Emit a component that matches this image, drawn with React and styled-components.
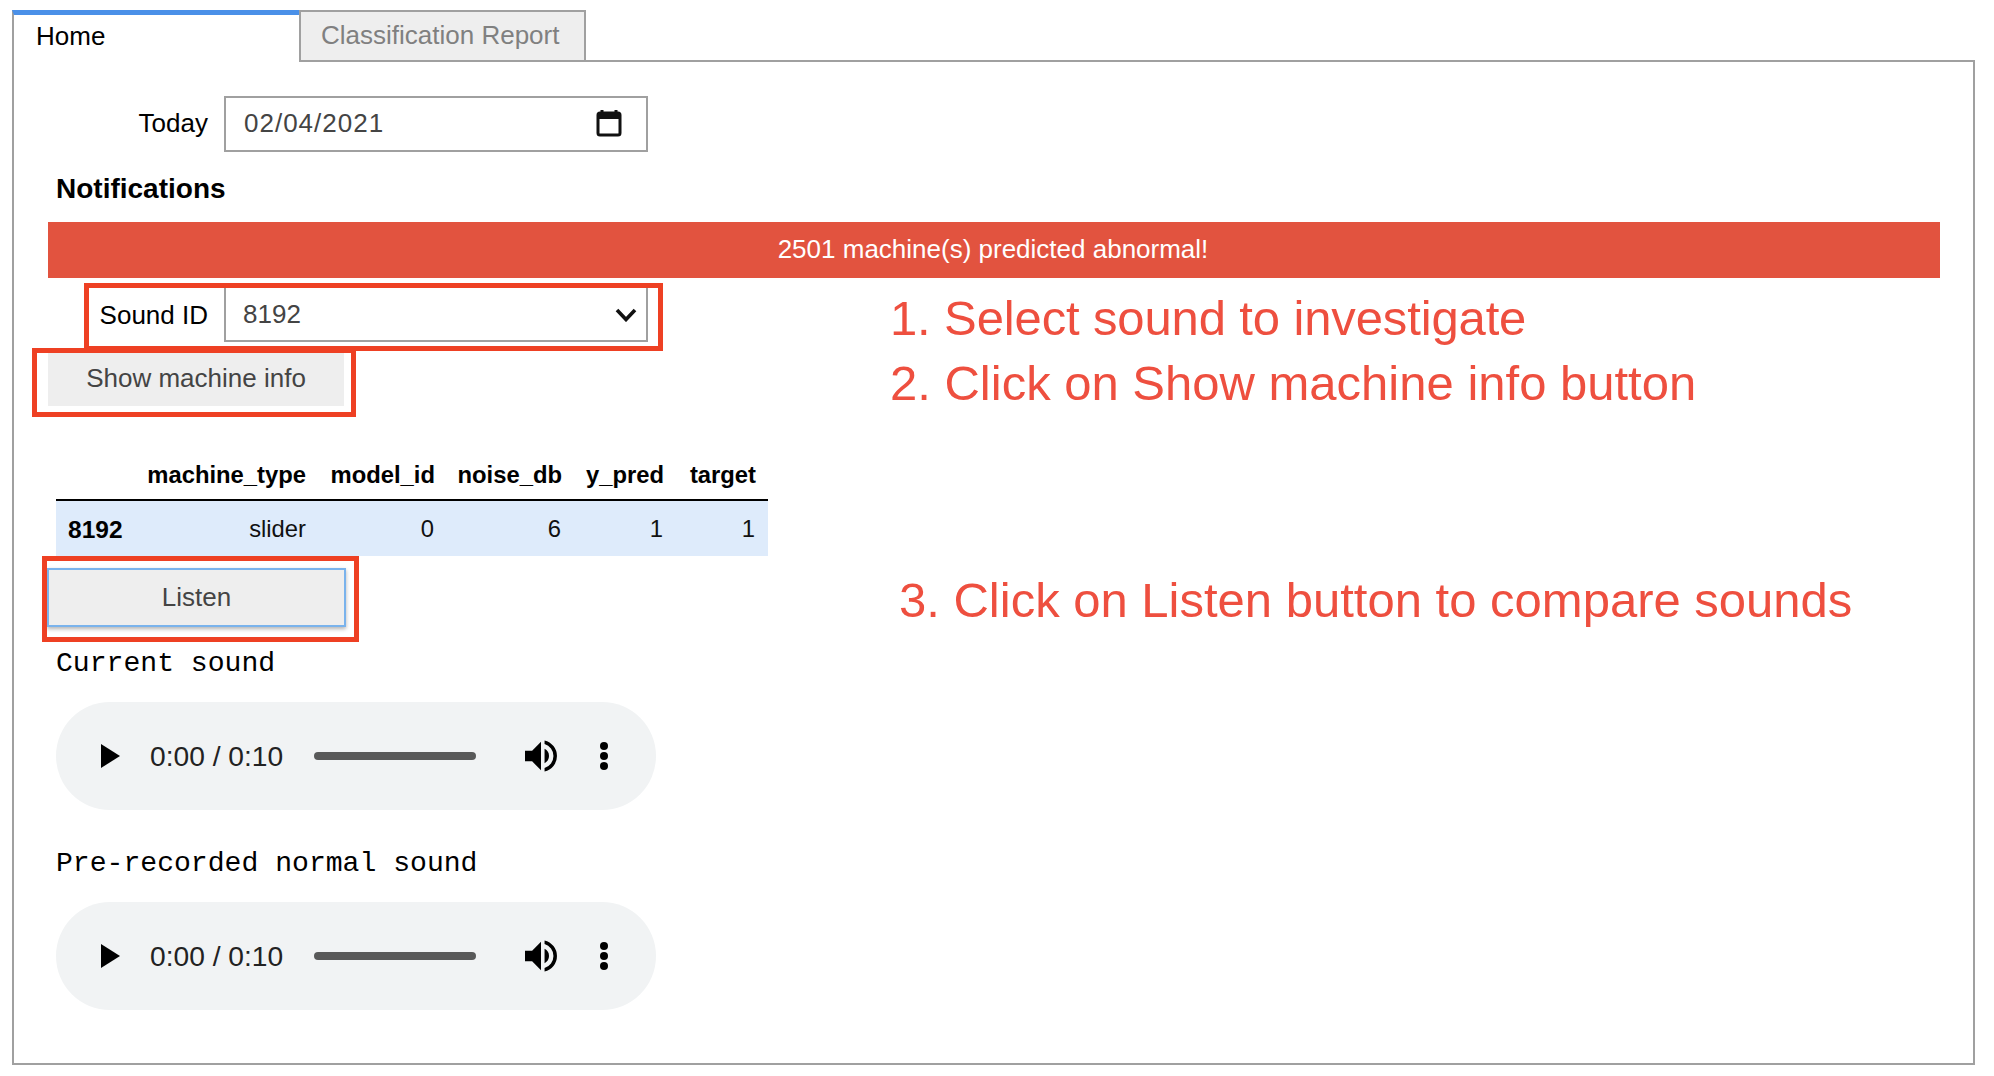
import React from 'react'
import styled, { createGlobalStyle } from 'styled-components'

const GlobalStyle = createGlobalStyle`
  html, body { margin: 0; padding: 0; background: #fff; }
  body { font-family: "Liberation Sans", Arial, sans-serif; font-size: 26px; color: #000; }
  * { box-sizing: border-box; }
`

const Page = styled.div`
  position: relative; width: 1994px; height: 1076px; padding: 10px 19px 0 12px; overflow: hidden;
`
const TabBar = styled.div`
  display: flex; position: relative; z-index: 1; height: 52px; margin-bottom: -2px;
`
const Tab = styled.div`
  width: 287px; height: 52px; display: flex; align-items: center;
  padding: 0 0 ${p => (p.$active ? '4px' : '2px')} ${p => (p.$active ? '22px' : '20px')};
  background: ${p => (p.$active ? '#fff' : '#eee')};
  color: ${p => (p.$active ? '#000' : '#808080')};
  border: 2px solid #a0a0a0;
  border-top: ${p => (p.$active ? '5px solid #4a90e8' : '2px solid #a0a0a0')};
  border-bottom: ${p => (p.$active ? 'none' : '2px solid #a0a0a0')};
  border-right: ${p => (p.$active ? 'none' : '2px solid #a0a0a0')};
`
const Panel = styled.div`
  height: 1005px; border: 2px solid #a0a0a0; padding: 34px 33px 0 34px;
`
const FieldRow = styled.div`
  display: grid; grid-template-columns: 152px 424px; column-gap: 16px; align-items: center; width: 592px;
  margin-top: ${p => p.$top || 0}px; margin-left: 8px;
`
const FieldLabel = styled.label`
  text-align: right; color: #000; line-height: 30px;
  padding: ${p => p.$pt || 0}px 0 ${p => p.$pb || 0}px;
`
const FieldBox = styled.div`
  height: 56px; border: 2px solid #a0a0a0; display: flex; align-items: center; justify-content: space-between;
  padding: ${p => p.$pt || 0}px ${p => p.$right}px ${p => p.$pb || 0}px ${p => p.$left}px;
  color: #444; letter-spacing: ${p => p.$spacing || 0}px; background: #fff;
`
const Heading = styled.h4`
  margin: 21px 0 0 8px; font-size: 28px; line-height: 32px; font-weight: bold; color: #000;
`
const AlertBar = styled.div`
  height: 56px; margin-top: 17px; background: #e2533f; color: #fff; display: flex; align-items: center;
  justify-content: center; padding: 0 2px 2px 0;
`
const ActionButton = styled.div`
  width: ${p => p.$width}px; height: ${p => p.$height}px; margin-top: ${p => p.$top}px; margin-left: ${p => p.$left || 0}px;
  background: #eee; color: #444; display: flex; align-items: center; justify-content: center;
  padding-bottom: ${p => (p.$focused ? 0 : 3)}px;
  border: ${p => (p.$focused ? '2px solid #7ab3ec' : 'none')};
  box-shadow: ${p => (p.$focused ? '0 2px 4px rgba(0,0,0,0.3)' : 'none')};
`
const DataTable = styled.table`
  width: 712px; margin: 42px 0 0 8px; border-collapse: collapse; table-layout: fixed; font-size: 23.8px;
  th, td { text-align: right; padding: 0 12px 0 0; }
  thead th { height: 52px; padding-top: 2px; font-weight: bold; color: #000; border-bottom: 2px solid #000; }
  thead th:nth-child(2) { padding-right: 13px; }
  tbody tr { background: #deebfb; height: 56px; }
  tbody th { text-align: left; padding: 2px 0 0 12px; font-weight: bold; font-size: 24.5px; }
  tbody td { color: #111; padding-right: 13px; }
`
const SoundLabel = styled.div`
  margin: ${p => p.$top}px 0 0 8px; font-family: "Liberation Mono", "Courier New", monospace; font-size: 28.1px;
  line-height: 32px; color: #000;
`
const Player = styled.div`
  width: 600px; height: 108px; margin: 22px 0 0 8px; border-radius: 54px; background: #f1f3f4;
  display: flex; align-items: center;
`
const PlayIcon = styled.svg`
  width: 19px; height: 24px; margin-left: 45px; flex: none;
`
const TimeText = styled.span`
  width: 132px; margin-left: 30px; flex: none; font-size: 28.2px; color: #222; white-space: nowrap;
`
const Track = styled.div`
  width: 162px; height: 8px; margin-left: 32px; flex: none; border-radius: 4px; background: #595959;
`
const VolumeIcon = styled.svg`
  width: 32px; height: 32px; margin-left: 49px; flex: none;
`
const MoreIcon = styled.svg`
  width: 10px; height: 30px; margin-left: 42px; flex: none;
`
const Highlight = styled.div`
  position: absolute; border: 5px solid #ee4023; pointer-events: none;
`
const SelectHighlight = styled(Highlight)`
  left: 84px; top: 283px; width: 579px; height: 68px;
`
const InfoHighlight = styled(Highlight)`
  left: 32px; top: 348px; width: 324px; height: 69px;
`
const ListenHighlight = styled(Highlight)`
  left: 42px; top: 556px; width: 317px; height: 86px;
`
const Callout = styled.div`
  position: absolute; left: ${p => p.$x}px; top: ${p => p.$y}px; font-size: 49px; line-height: 56px;
  color: #ee4f3f; white-space: nowrap; letter-spacing: ${p => p.$spacing || 0}px;
`

const CalendarIcon = () => (
  <svg width="26" height="28" viewBox="0 0 26 28">
    <path d="M6 1v4M20 1v4" stroke="#111" strokeWidth="3" />
    <rect x="2" y="4" width="22" height="22" rx="2" fill="none" stroke="#111" strokeWidth="3" />
    <rect x="2" y="4" width="22" height="6" fill="#111" />
  </svg>
)

const ChevronIcon = () => (
  <svg width="22" height="14" viewBox="0 0 22 14">
    <path d="M2 2l9 9.5L20 2" fill="none" stroke="#111" strokeWidth="3.6" />
  </svg>
)

const AudioPlayer = () => (
  <Player>
    <PlayIcon viewBox="0 0 19 24"><path d="M0 0l19 12L0 24z" fill="#000" /></PlayIcon>
    <TimeText>0:00 / 0:10</TimeText>
    <Track />
    <VolumeIcon viewBox="3 3 18 18">
      <path d="M3 9v6h4l5 5V4L7 9H3zm13.5 3A4.5 4.5 0 0 0 14 7.97v8.05A4.5 4.5 0 0 0 16.5 12zM14 3.23v2.06a7 7 0 0 1 0 13.42v2.06a9 9 0 0 0 0-17.54z" fill="#000" />
    </VolumeIcon>
    <MoreIcon viewBox="0 0 10 30">
      <circle cx="5" cy="5" r="4" fill="#000" />
      <circle cx="5" cy="15" r="4" fill="#000" />
      <circle cx="5" cy="25" r="4" fill="#000" />
    </MoreIcon>
  </Player>
)

export default function App() {
  return (
    <Page>
      <GlobalStyle />
      <TabBar>
        <Tab $active>Home</Tab>
        <Tab>Classification Report</Tab>
      </TabBar>
      <Panel>
        <FieldRow>
          <FieldLabel $pb={2}>Today</FieldLabel>
          <FieldBox $left={18} $right={24} $spacing={1} $pb={2}>02/04/2021<CalendarIcon /></FieldBox>
        </FieldRow>
        <Heading>Notifications</Heading>
        <AlertBar>2501 machine(s) predicted abnormal!</AlertBar>
        <FieldRow $top={8}>
          <FieldLabel $pt={2}>Sound ID</FieldLabel>
          <FieldBox $left={17} $right={9} $pt={1}>8192<ChevronIcon /></FieldBox>
        </FieldRow>
        <ActionButton $width={296} $height={53} $top={11}>Show machine info</ActionButton>
        <DataTable>
          <colgroup>
            <col width="79" />
            <col width="184" />
            <col width="128" />
            <col width="127" />
            <col width="102" />
            <col width="92" />
          </colgroup>
          <thead>
            <tr>
              <th></th>
              <th>machine_type</th>
              <th>model_id</th>
              <th>noise_db</th>
              <th>y_pred</th>
              <th>target</th>
            </tr>
          </thead>
          <tbody>
            <tr>
              <th>8192</th>
              <td>slider</td>
              <td>0</td>
              <td>6</td>
              <td>1</td>
              <td>1</td>
            </tr>
          </tbody>
        </DataTable>
        <ActionButton $width={299} $height={59} $top={12} $left={-1} $focused>Listen</ActionButton>
        <SoundLabel $top={21}>Current sound</SoundLabel>
        <AudioPlayer />
        <SoundLabel $top={38}>Pre-recorded normal sound</SoundLabel>
        <AudioPlayer />
      </Panel>
      <SelectHighlight />
      <InfoHighlight />
      <ListenHighlight />
      <Callout $x={890} $y={290} $spacing={-0.13}>1. Select sound to investigate</Callout>
      <Callout $x={890} $y={355}>2. Click on Show machine info button</Callout>
      <Callout $x={899} $y={572}>3. Click on Listen button to compare sounds</Callout>
    </Page>
  )
}
